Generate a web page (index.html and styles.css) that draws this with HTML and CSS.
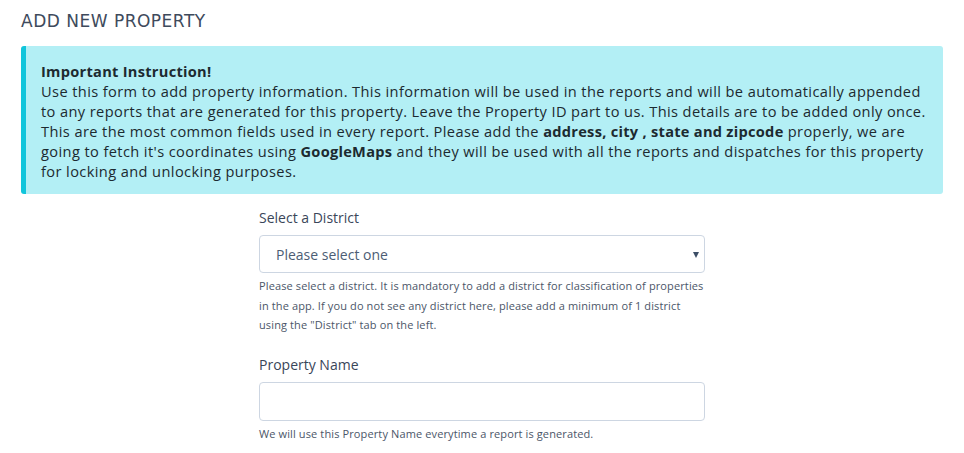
FILE: index.html
```html
<!DOCTYPE html>
<html>
<head>
<meta charset="utf-8">
<link rel="stylesheet" href="styles.css">
</head>
<body>
<div class="page">
  <h1 class="title">ADD NEW PROPERTY</h1>
  <div class="alert">
    <strong>Important Instruction!</strong><br>
    Use this form to add property information. This information will be used in the reports and will be automatically appended to any reports that are generated for this property. Leave the Property ID part to us. This details are to be added only once. This are the most common fields used in every report. Please add the <strong>address, city , state and zipcode</strong> properly, we are going to fetch it's coordinates using <strong>GoogleMaps</strong> and they will be used with all the reports and dispatches for this property for locking and unlocking purposes.
  </div>
  <form class="form">
    <div class="group">
      <label class="label">Select a District</label>
      <div class="select">
        <span class="select-text">Please select one</span>
        <span class="caret"></span>
      </div>
      <p class="help">Please select a district. It is mandatory to add a district for classification of properties in the app. If you do not see any district here, please add a minimum of 1 district using the "District" tab on the left.</p>
    </div>
    <div class="group">
      <label class="label">Property Name</label>
      <div class="input"></div>
      <p class="help">We will use this Property Name everytime a report is generated.</p>
    </div>
  </form>
</div>
</body>
</html>
```
FILE: styles.css
```css
html, body {
  margin: 0;
  padding: 0;
  background: #fff;
}
body {
  font-family: "Open Sans", "DejaVu Sans", sans-serif;
  color: #3e4b5e;
}
.page {
  padding: 12px 21px 0 21px;
}
.title {
  margin: 0 0 15px 0;
  font-family: "DejaVu Sans", "Lato", sans-serif;
  font-weight: normal;
  font-size: 17px;
  letter-spacing: 0.5px;
  line-height: 19px;
  color: #3e4a5c;
}
.alert {
  background: #b3eff5;
  border-left: 5px solid #11c5db;
  border-radius: 3px;
  padding: 15px 15px 13px 15px;
  font-size: 14.6px;
  line-height: 20px;
  color: #1c2a30;
  letter-spacing: 0.4px;
}
.alert strong {
  font-weight: 700;
  letter-spacing: 0.28px;
}
.form {
  width: 446px;
  margin: 14px auto 0;
}
.group {
  margin-bottom: 20px;
}
.label {
  display: block;
  font-size: 14px;
  line-height: 20px;
  color: #3a4659;
  margin-bottom: 7px;
}
.select, .input {
  box-sizing: border-box;
  height: 38px;
  border: 1px solid #cdd6e2;
  border-radius: 4px;
  display: flex;
  align-items: center;
  justify-content: space-between;
  padding: 0 5px 0 16px;
}
.input {
  height: 39px;
}
.select-text {
  font-size: 14px;
  color: #4c5d74;
}
.caret {
  width: 0;
  height: 0;
  border-left: 3px solid transparent;
  border-right: 3px solid transparent;
  border-top: 6px solid #3c4e66;
  margin-top: 1px;
}
.help {
  margin: 3px 0 0 0;
  font-size: 11px;
  line-height: 19.5px;
  letter-spacing: 0.12px;
  color: #4b5668;
}
```
